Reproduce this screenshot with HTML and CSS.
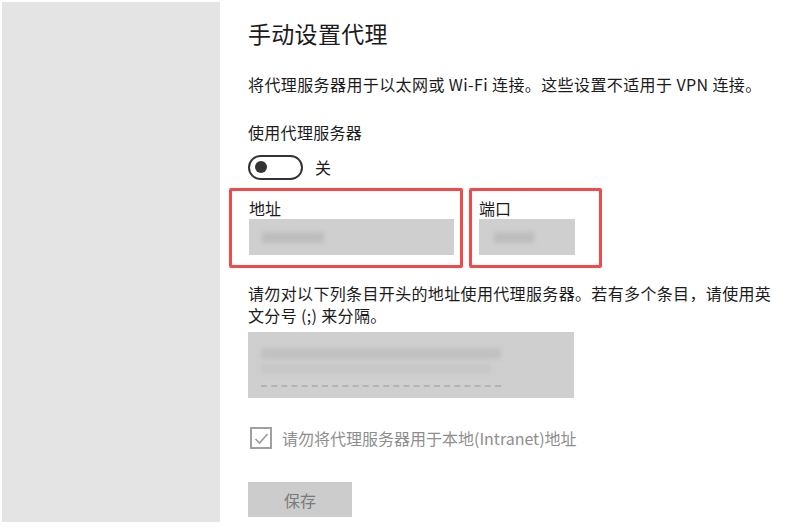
FILE: index.html
```html
<!DOCTYPE html>
<html lang="zh-CN">
<head>
  <meta charset="UTF-8">
  <meta name="viewport" content="width=device-width, initial-scale=1.0">
  <title>代理</title>
  <link rel="stylesheet" href="styles.css">
</head>
<body>

  <div class="window">
    <aside class="sidebar"></aside>

    <main class="content">
      <h1>手动设置代理</h1>
      <p class="desc">将代理服务器用于以太网或 Wi-Fi 连接。这些设置不适用于 VPN 连接。</p>

      <div class="label">使用代理服务器</div>
      <div class="toggle-row">
        <span class="toggle"><span class="knob"></span></span>
        <span>关</span>
      </div>

      <div class="fields">
        <div class="field field-address">
          <div class="field-label">地址</div>
          <div class="input"><span class="blur blur-address"></span></div>
        </div>
        <div class="field field-port">
          <div class="field-label">端口</div>
          <div class="input"><span class="blur blur-port"></span></div>
        </div>
      </div>

      <p class="note">请勿对以下列条目开头的地址使用代理服务器。若有多个条目，请使用英<br>文分号 (;) 来分隔。</p>

      <div class="textarea">
        <span class="blur row-1"></span>
        <span class="blur row-2"></span>
        <span class="dots"></span>
      </div>

      <div class="check-row">
        <span class="checkbox">
          <svg width="17" height="17" viewBox="0 0 17 17"><path d="M2.5 9 L6.5 13 L14.5 4" fill="none" stroke="#9a9a9a" stroke-width="1.6"/></svg>
        </span>
        <span>请勿将代理服务器用于本地(Intranet)地址</span>
      </div>

      <button class="save">保存</button>
    </main>
  </div>

</body>
</html>
```

FILE: styles.css
```css
body {
  margin: 0;
  background-color: #ffffff;
  font-family: "Noto Sans CJK SC", "Noto Sans", sans-serif;
  color: #1b1b1b;
}

.window {
  display: flex;
  height: 527px;
}

.sidebar {
  width: 218px;
  margin: 2px 0 5px 2px;
  background-color: #e4e4e4;
}

.content {
  flex: 1;
  padding: 18px 0 0 28px;
  display: flex;
  flex-direction: column;
  align-items: flex-start;
}

h1 {
  margin: 0;
  font-size: 23px;
  font-weight: normal;
  line-height: 30px;
  letter-spacing: 0.3px;
}

.desc {
  margin: 26px 0 0;
  font-size: 16px;
  line-height: 20px;
  letter-spacing: 0.4px;
}

.label {
  margin-top: 28px;
  font-size: 16px;
  line-height: 20px;
  letter-spacing: 0.3px;
}

.toggle-row {
  margin-top: 13px;
  display: flex;
  align-items: center;
  gap: 12px;
  height: 24px;
  font-size: 16px;
}

.toggle {
  width: 46px;
  height: 21px;
  border: 2px solid #333333;
  border-radius: 13px;
  display: flex;
  align-items: center;
  padding-left: 5px;
  box-sizing: content-box;
}

.knob {
  width: 12px;
  height: 12px;
  border-radius: 50%;
  background-color: #333333;
}

.fields {
  margin: 9px 0 0 -19px;
  display: flex;
  gap: 6px;
}

.field {
  border: 3px solid #f24a4a;
  border-radius: 2px;
  padding: 7px 6px 10px 17px;
}

.field-port {
  padding: 7px 24px 10px 7px;
}

.field-label {
  font-size: 16px;
  line-height: 20px;
  margin-bottom: 1px;
}

.input {
  height: 36px;
  background-color: #cfcfcf;
  display: flex;
  align-items: center;
}

.field-address .input {
  width: 205px;
}

.field-port .input {
  width: 96px;
}

.blur {
  display: block;
  height: 11px;
  background-color: #bdbdbd;
  filter: blur(2px);
}

.blur-address {
  width: 62px;
  margin-left: 13px;
}

.blur-port {
  width: 40px;
  margin-left: 15px;
}

.note {
  margin: 14px 0 0;
  font-size: 16px;
  line-height: 22px;
  letter-spacing: 0.35px;
}

.textarea {
  margin-top: 6px;
  width: 326px;
  height: 66px;
  background-color: #cfcfcf;
  display: flex;
  flex-direction: column;
  padding-left: 13px;
  box-sizing: border-box;
}

.row-1 {
  margin-top: 16px;
  width: 240px;
  background-color: #c0c0c0;
}

.row-2 {
  margin-top: 5px;
  width: 230px;
  height: 9px;
  background-color: #c6c6c6;
}

.dots {
  margin-top: 12px;
  width: 240px;
  border-top: 2px dashed #b4b4b4;
}

.check-row {
  margin-top: 28px;
  display: flex;
  align-items: center;
  gap: 10px;
  height: 24px;
  font-size: 16px;
  color: #8e8e8e;
}

.checkbox {
  width: 18px;
  height: 18px;
  border: 2px solid #a0a0a0;
  display: flex;
  align-items: center;
  justify-content: center;
  margin-left: 2px;
}

.save {
  margin-top: 32px;
  width: 104px;
  height: 35px;
  border: none;
  background-color: #cccccc;
  color: #7a7a7a;
  font-family: inherit;
  font-size: 16px;
  padding: 0;
}
```
